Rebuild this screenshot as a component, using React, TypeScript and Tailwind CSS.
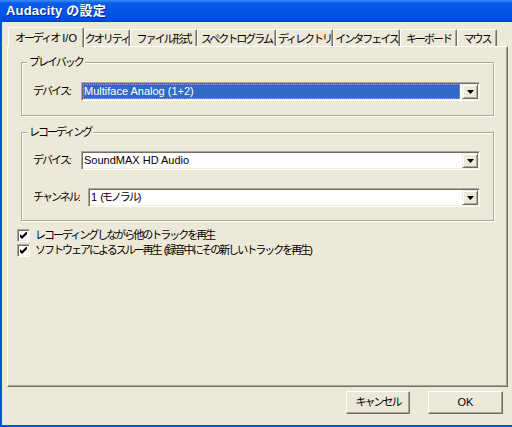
import React from 'react';

const tabs = [
  { label: 'クオリティ', w: 'w-[46px]' },
  { label: 'ファイル形式', w: 'w-[67px]' },
  { label: 'スペクトログラム', w: 'w-[79px]' },
  { label: 'ディレクトリ', w: 'w-[57px]' },
  { label: 'インタフェイス', w: 'w-[67px]' },
  { label: 'キーボード', w: 'w-[57px]' },
  { label: 'マウス', w: 'w-[40px]' },
];

// Japanese glyphs are narrower in the original UI font, so squeeze them a bit
function J({ children }: { children: React.ReactNode }) {
  return <span className="tracking-[-2px]">{children}</span>;
}

function DropButton() {
  return (
    <div className="w-[16px] h-full flex items-center justify-center bg-[#ECE9D8] border border-t-[#F1EFE2] border-l-[#F1EFE2] border-b-[#716F64] border-r-[#716F64] shadow-[inset_1px_1px_0_#ffffff,inset_-1px_-1px_0_#ACA899]">
      <svg width="7" height="4" viewBox="0 0 7 4">
        <path d="M0 0h7L3.5 4z" fill="#000" />
      </svg>
    </div>
  );
}

function Combo({ children, selected }: { children: React.ReactNode; selected?: boolean }) {
  return (
    <div className="flex-1 h-[19px] flex items-stretch p-[1px] bg-white border border-t-[#ACA899] border-l-[#ACA899] border-b-white border-r-white shadow-[inset_1px_1px_0_#716F64,inset_-1px_-1px_0_#F1EFE2]">
      <div
        className={
          selected
            ? 'flex-1 mr-[2px] flex items-center pl-[1px] bg-[#316AC5] text-white outline-1 outline-dotted outline-[#C9A24A] -outline-offset-1'
            : 'flex-1 mr-[2px] flex items-center pl-[1px] text-black'
        }
      >
        {children}
      </div>
      <DropButton />
    </div>
  );
}

function Check({ children }: { children: React.ReactNode }) {
  return (
    <div className="flex items-center h-[15px]">
      <div className="w-[13px] h-[13px] flex items-center justify-center bg-white border border-t-[#ACA899] border-l-[#ACA899] border-b-white border-r-white shadow-[inset_1px_1px_0_#716F64,inset_-1px_-1px_0_#F1EFE2]">
        <svg width="7" height="7" viewBox="0 0 7 7">
          <path d="M0 2v3l2 2 5-5V-1L2 4z" fill="#000" />
        </svg>
      </div>
      <span className="ml-[5px] whitespace-nowrap">{children}</span>
    </div>
  );
}

function Group({ title, className, children }: { title: string; className: string; children: React.ReactNode }) {
  return (
    <div className={`relative mx-[13px] border border-[#ACA899] shadow-[1px_1px_0_#ffffff,inset_1px_1px_0_#ffffff] ${className}`}>
      <span className="absolute -top-[8px] left-[5px] px-[2px] leading-[14px] bg-[#ECE9D8] tracking-[-2px]">{title}</span>
      {children}
    </div>
  );
}

export default function App() {
  return (
    <div className="w-[512px] h-[427px] flex flex-col overflow-hidden bg-[#ECE9D8] text-[11px] text-black font-['Liberation_Sans','Noto_Sans_CJK_JP',sans-serif]">
      {/* Title bar */}
      <div className="h-[22px] shrink-0 flex items-center pl-[6px] bg-[linear-gradient(180deg,#3D8CF5_0%,#0A5CEB_14%,#0055E5_50%,#0050DD_86%,#0042C4_100%)]">
        <span className="text-white font-bold text-[13px] tracking-[0.2px] [text-shadow:1px_1px_0_#0A2A8A]">Audacity の設定</span>
      </div>

      {/* Body */}
      <div className="flex-1 flex flex-col border-l-2 border-b-2 border-[#0054E3]">
        {/* Tabs */}
        <div className="flex items-end h-[20px] mt-[5px] ml-[6px] -mb-[1px]">
          <div className="relative z-10 w-[76px] h-[20px] flex items-start justify-center pt-[2px] bg-[#ECE9D8] border-t border-l border-r border-t-white border-l-white border-r-[#716F64] rounded-t-[2px] shadow-[inset_-1px_0_0_#ACA899] whitespace-nowrap">
            <J>オーディオ</J>&nbsp;I/O
          </div>
          {tabs.map((t) => (
            <div
              key={t.label}
              className={`${t.w} h-[18px] flex items-start justify-center pt-[1px] bg-[#ECE9D8] border-t border-l border-r border-t-white border-l-white border-r-[#716F64] rounded-t-[2px] shadow-[inset_-1px_0_0_#ACA899] whitespace-nowrap overflow-hidden`}
            >
              <J>{t.label}</J>
            </div>
          ))}
        </div>

        {/* Panel */}
        <div className="ml-[5px] w-[501px] h-[341px] border border-t-white border-l-white border-b-[#716F64] border-r-[#716F64] shadow-[inset_-1px_-1px_0_#ACA899]">
          <Group title="プレイバック" className="mt-[15px] h-[54px] pt-[19px]">
            <div className="flex items-center pl-[11px] pr-[13px]">
              <span className="w-[48px]"><J>デバイス:</J></span>
              <Combo selected>Multiface Analog (1+2)</Combo>
            </div>
          </Group>

          <Group title="レコーディング" className="mt-[16px] h-[89px] pt-[18px]">
            <div className="flex items-center pl-[11px] pr-[13px]">
              <span className="w-[48px]"><J>デバイス:</J></span>
              <Combo>SoundMAX HD Audio</Combo>
            </div>
            <div className="flex items-center pl-[11px] pr-[13px] mt-[18px]">
              <span className="w-[55px]"><J>チャンネル:</J></span>
              <Combo>
                <span>1&nbsp;</span>
                <J>(モノラル)</J>
              </Combo>
            </div>
          </Group>

          <div className="mt-[7px] ml-[9px] flex flex-col">
            <Check>
              <J>レコーディングしながら他のトラックを再生</J>
            </Check>
            <Check>
              <J>ソフトウェアによるスルー再生</J>&nbsp;<J>(録音中にその新しいトラックを再生)</J>
            </Check>
          </div>
        </div>

        {/* Buttons */}
        <div className="flex justify-end gap-[18px] pr-[9px] mt-[4px]">
          <button className="w-[64px] h-[23px] flex items-center justify-center bg-[#ECE9D8] border border-t-white border-l-white border-b-[#716F64] border-r-[#716F64] shadow-[inset_-1px_-1px_0_#ACA899]">
            <J>キャンセル</J>
          </button>
          <button className="w-[75px] h-[23px] flex items-center justify-center bg-[#ECE9D8] border border-t-white border-l-white border-b-[#716F64] border-r-[#716F64] shadow-[inset_-1px_-1px_0_#ACA899]">
            OK
          </button>
        </div>
      </div>
    </div>
  );
}
